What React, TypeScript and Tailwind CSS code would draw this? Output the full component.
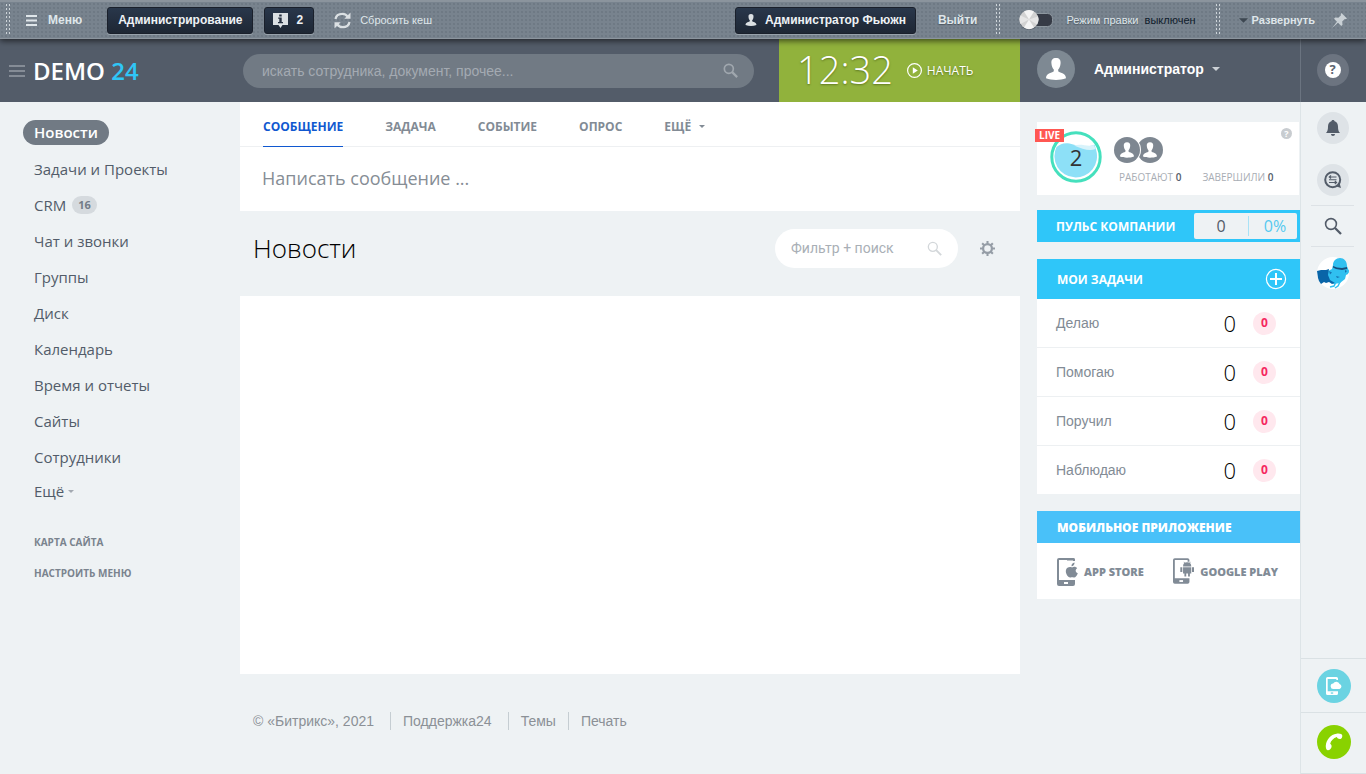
import React from 'react';

const arial = "font-['Liberation_Sans',Arial,sans-serif]";

const menuItems: { label: string; count?: number }[] = [
  { label: 'Задачи и Проекты' },
  { label: 'CRM', count: 16 },
  { label: 'Чат и звонки' },
  { label: 'Группы' },
  { label: 'Диск' },
  { label: 'Календарь' },
  { label: 'Время и отчеты' },
  { label: 'Сайты' },
  { label: 'Сотрудники' },
];

const postTabs = ['ЗАДАЧА', 'СОБЫТИЕ', 'ОПРОС'];
const taskRows = ['Делаю', 'Помогаю', 'Поручил', 'Наблюдаю'];

function Grip() {
  return (
    <svg className="h-8 w-[5px] shrink-0" viewBox="0 0 5 32" shapeRendering="crispEdges" aria-hidden="true">
      {[0, 3].map((x) => (
        <line key={x} x1={x + 0.5} x2={x + 0.5} y1="0" y2="32" stroke="#cdd4d9" strokeWidth="1" strokeDasharray="2 2" />
      ))}
    </svg>
  );
}

function Caret({ className }: { className: string }) {
  return (
    <svg className={className} viewBox="0 0 8 4" fill="currentColor" aria-hidden="true">
      <path d="M0 0h8L4 4z" />
    </svg>
  );
}

function Magnifier({ className, width = 2 }: { className: string; width?: number }) {
  return (
    <svg className={className} viewBox="0 0 18 18" fill="none" stroke="currentColor" strokeWidth={width} aria-hidden="true">
      <circle cx="7" cy="7" r="5.4" />
      <path d="M11 11l6 6" strokeWidth={width + 0.7} />
    </svg>
  );
}

function Person({ className }: { className: string }) {
  return (
    <svg className={className} viewBox="0 0 20 22" fill="currentColor" aria-hidden="true">
      <path d="M10 0C6.600 0 5.200 2 5.400 5c.2 3.500 1.200 5.200 2.400 6.400v1.800C6.800 15 0 14.500 0 20.300 3 21.500 6.500 22 10 22s7-.5 10-1.700C20 14.500 13.200 15 12.200 13.200v-1.800c1.200-1.200 2.200-2.900 2.400-6.400C14.800 2 13.400 0 10 0z" />
    </svg>
  );
}

function AdminBar() {
  const dark =
    'flex h-[27px] items-center rounded-[3px] border border-[#1a202b] bg-linear-to-b from-[#29374b] to-[#1e2734] text-xs font-bold text-[#eef2f5] shadow-[0_1px_0_#98a2ab]';
  return (
    <div
      className={`${arial} relative z-10 flex h-[39px] items-center border-t-2 border-b border-t-[#8b949d] border-b-[#8c959e] bg-[#78838e] bg-[radial-gradient(#6b7681_0.6px,transparent_1px)] bg-[size:4px_4px] px-[6px] text-[11px] text-[#dfe6ea] shadow-[0_2px_6px_rgba(0,0,0,0.6)] [text-shadow:0_1px_1px_rgba(40,50,60,0.5)]`}
    >
      <Grip />
      <button type="button" className="ml-[15px] flex items-center gap-[11px] text-xs font-bold">
        <svg className="h-[11px] w-[11px]" viewBox="0 0 11 11" fill="currentColor" aria-hidden="true">
          <path d="M0 0h11v2H0zM0 4.500h11v2H0zM0 9h11v2H0z" />
        </svg>
        Меню
      </button>
      <button type="button" className={`${dark} ml-[25px] px-[10px]`}>Администрирование</button>
      <button type="button" className={`${dark} ml-[11px] gap-2 px-2`} aria-label="Уведомления: 2">
        <svg className="h-[15px] w-[15px]" viewBox="0 0 15 15" aria-hidden="true">
          <path d="M0 0h15v12H9.500L7.500 15l-2-3H0z" fill="#dbe0e3" />
          <path d="M6.200 1.500h2.500v2H6.200zM5.200 4.600h3.500v4.400h1.300v1.300H5V9h1.300V5.800H5.200z" fill="#263040" />
        </svg>
        <span className="pr-[2px]">2</span>
      </button>
      <button type="button" className="ml-5 flex items-center gap-[9px] whitespace-nowrap">
        <svg className="h-[17px] w-[17px]" viewBox="0 0 17 17" fill="none" stroke="#dbe0e3" strokeWidth="2.200" aria-hidden="true">
          <path d="M1.500 7C2 3.500 5 1.800 8.500 1.800c2.300 0 3.800 1 5 2.700" />
          <path d="M15.500 10c-.5 3.500-3.500 5.200-7 5.200-2.300 0-3.800-1-5-2.700" />
          <path d="M16.500.5v6.200h-6.200zM.5 16.500v-6.200h6.200z" fill="#dbe0e3" stroke="none" />
        </svg>
        <span>Сбросить кеш</span>
      </button>
      <button type="button" className={`${dark} ml-auto gap-2 px-[9px]`}>
        <Person className="h-3 w-3 text-[#dbe0e3]" />
        Администратор Фьюжн
      </button>
      <a href="#logout" className="mr-[18px] ml-[22px] text-xs font-bold">Выйти</a>
      <Grip />
      <label className="mr-5 ml-[18px] flex items-center gap-[14px] whitespace-nowrap">
        <input type="checkbox" className="peer sr-only" />
        <svg className="h-[22px] w-[34px]" viewBox="0 0 34 22" aria-hidden="true">
          <rect x="8" y="4.500" width="25.500" height="13" rx="5" fill="#363b46" stroke="#8d979f" />
          <circle cx="10" cy="11.500" r="9.500" fill="#59626c" />
          <circle cx="10" cy="10.500" r="9.500" fill="#d2d2d2" />
          <path d="M10 10.500L5 2.500a9.500 9.500 0 0 1 10 0zM10 10.500L15 18.600a9.500 9.500 0 0 1-10 0z" fill="#f4f4f4" />
          <path d="M10 10.500l9-3a9.500 9.500 0 0 1-1 8zM10 10.500L1.500 15a9.500 9.500 0 0 1 0-8.500z" fill="#e6e6e6" />
        </svg>
        <span>
          Режим правки <span className="ml-[3px] text-[#101c2c] [text-shadow:none]">выключен</span>
        </span>
      </label>
      <Grip />
      <button type="button" className="ml-[18px] flex items-center gap-1 font-bold">
        <Caret className="h-[5px] w-[9px] text-[#3d4751]" />
        Развернуть
      </button>
      <button type="button" aria-label="Закрепить панель" className="mr-[13px] ml-[17px]">
        <svg className="h-[15px] w-[15px]" viewBox="0 0 15 15" fill="#c9d0d5" aria-hidden="true">
          <path d="M9.500 0L15 5.500l-1.300.8-.9-.3-2.600 2.600.4 3.200-1.300 1.200L6 9.800 0 15l5-6.200L2 5.700l1.300-1.200 3.100.3L9 2.200 8.700 1.200z" />
        </svg>
      </button>
    </div>
  );
}

function Header() {
  return (
    <header className="flex h-[63px] bg-[#535c69]">
      <div className="flex w-60 shrink-0 items-center gap-2 pl-[9px]">
        <button type="button" aria-label="Свернуть меню" className="text-[#858c96]">
          <svg className="h-3 w-4" viewBox="0 0 16 12" fill="currentColor" aria-hidden="true">
            <path d="M0 0h16v2H0zM0 5h16v2H0zM0 10h16v2H0z" />
          </svg>
        </button>
        <a href="#home" className="text-2xl font-semibold text-white">
          DEMO <span className="text-[#2fc6f6]">24</span>
        </a>
      </div>
      <div className="flex min-w-0 flex-1 items-center pr-[25px] pl-[3px]">
        <label className="flex h-[34px] flex-1 items-center rounded-full bg-[#717a84] pr-4 pl-[19px]">
          <input
            type="text"
            aria-label="Поиск"
            placeholder="искать сотрудника, документ, прочее..."
            className={`${arial} min-w-0 flex-1 bg-transparent text-sm text-white outline-none placeholder:text-[#a4aab2]`}
          />
          <Magnifier className="h-[15px] w-[15px] text-[#a0a7ae]" />
        </label>
      </div>
      <button
        type="button"
        className="flex w-[241px] shrink-0 items-center bg-[#91b23c] pl-[18px] text-white [text-shadow:0_1px_2px_rgba(60,80,10,0.6)]"
      >
        <span className="pb-[3px] text-[38px] leading-[60px] font-light">12:32</span>
        <svg className="ml-[14px] h-[15px] w-[15px]" viewBox="0 0 15 15" fill="none" stroke="currentColor" aria-hidden="true">
          <circle cx="7.500" cy="7.500" r="6.900" strokeWidth="1.200" />
          <path d="M5.800 4.300v6.400l5-3.200z" fill="currentColor" stroke="none" />
        </svg>
        <span className="ml-[5px] text-xs">НАЧАТЬ</span>
      </button>
      <button type="button" className={`${arial} flex w-[280px] shrink-0 items-center pb-[3px] pl-[17px] text-sm font-bold text-white`}>
        <span className="flex h-[38px] w-[38px] items-center justify-center rounded-full bg-[#7e8993]">
          <Person className="h-[22px] w-5" />
        </span>
        <span className="ml-[19px]">Администратор</span>
        <Caret className="ml-2 h-1 w-2 text-[#ccd1d6]" />
      </button>
      <div className="flex w-[66px] shrink-0 items-center justify-center border-l border-[#6b7480] pr-[2px] pb-[2px]">
        <button type="button" aria-label="Помощь" className="flex h-8 w-8 items-center justify-center rounded-full bg-[#6c7480]">
          <span className="flex h-4 w-4 items-center justify-center rounded-full bg-white text-[13px] leading-none font-bold text-[#5b6470]">?</span>
        </button>
      </div>
    </header>
  );
}

function Sidebar() {
  return (
    <nav className="w-60 shrink-0 pt-[18px] pl-[23px] text-[15px] text-[#525c69]">
      <a href="#news" className="inline-flex h-[25px] items-center rounded-full bg-[#717a84] px-[11px] font-semibold text-white">
        Новости
      </a>
      <ul className="mt-[6px] pl-[11px]">
        {menuItems.map((item) => (
          <li key={item.label} className="flex h-9 items-center">
            <a href={`#${item.label}`}>{item.label}</a>
            {item.count && (
              <span className="ml-[6px] flex h-[18px] items-center rounded-full bg-[#d5dade] px-[6px] text-[11px] font-bold text-[#737c87]">
                {item.count}
              </span>
            )}
          </li>
        ))}
        <li className="flex h-8 items-center">
          <button type="button" className="flex items-center gap-1">
            Ещё <Caret className="h-[3px] w-[6px] text-[#a3a9b1]" />
          </button>
        </li>
      </ul>
      <ul className="mt-5 pl-[11px] text-[10px] font-bold text-[#7a838e]">
        <li className="flex h-[31px] items-center"><a href="#map">КАРТА САЙТА</a></li>
        <li className="flex h-[31px] items-center"><a href="#setup">НАСТРОИТЬ МЕНЮ</a></li>
      </ul>
    </nav>
  );
}

function Feed() {
  return (
    <main className="min-w-0 flex-1">
      <section className="bg-white">
        <div className="flex h-[45px] gap-[42px] border-b border-[#eef0f2] pl-[23px] text-xs font-bold text-[#828b95]">
          <button type="button" className="-mb-px flex items-center border-b border-[#1058d0] pt-[5px] text-[#1058d0]">СООБЩЕНИЕ</button>
          {postTabs.map((tab) => (
            <button key={tab} type="button" className="pt-[5px]">{tab}</button>
          ))}
          <button type="button" className="flex items-center gap-2 pt-[5px]">
            ЕЩЁ <Caret className="h-[3px] w-[6px]" />
          </button>
        </div>
        <button type="button" className="flex h-16 w-full items-center pb-[2px] pl-[22px] text-lg text-[#868d95]">
          Написать сообщение ...
        </button>
      </section>
      <div className="flex h-[85px] items-center pr-[25px] pb-[10px] pl-[13px]">
        <h1 className="text-[26px] font-light text-black">Новости</h1>
        <label className="ml-auto flex h-[39px] w-[183px] items-center rounded-full bg-white px-4">
          <input
            type="text"
            aria-label="Фильтр и поиск"
            placeholder="Фильтр + поиск"
            className="min-w-0 flex-1 bg-transparent pb-[2px] font-['Roboto',sans-serif] text-sm outline-none placeholder:text-[#a9afb6]"
          />
          <Magnifier className="h-[15px] w-[15px] text-[#d3d7da]" width={1.6} />
        </label>
        <button type="button" aria-label="Настройки ленты" className="ml-[22px]">
          <svg className="h-[15px] w-[15px]" viewBox="0 0 16 16" fill="none" stroke="#959da6" aria-hidden="true">
            <circle cx="8" cy="8" r="4.700" strokeWidth="2.400" />
            <path d="M8 0v3M8 13v3M0 8h3M13 8h3M2.300 2.300l2.200 2.200M11.500 11.500l2.200 2.200M13.700 2.300l-2.200 2.200M4.500 11.500l-2.200 2.200" strokeWidth="2.200" />
          </svg>
        </button>
      </div>
      <section className="h-[378px] bg-white" />
      <footer className={`${arial} flex items-center pt-[38px] pb-8 pl-[13px] text-sm leading-[18px] text-[#8b9096]`}>
        <span className="border-r border-[#c5cdd2] pr-4">© «Битрикс», 2021</span>
        <a href="#support" className="border-r border-[#c5cdd2] pr-4 pl-3">Поддержка24</a>
        <a href="#themes" className="border-r border-[#c5cdd2] px-3">Темы</a>
        <a href="#print" className="px-3">Печать</a>
      </footer>
    </main>
  );
}

function PhoneFrame() {
  return (
    <>
      <path d="M2 0h14a2 2 0 0 1 2 2v2h-2V2H2v20h16v4a2 2 0 0 1-2 2H2a2 2 0 0 1-2-2V2a2 2 0 0 1 2-2z" />
      <rect x="7" y="24" width="4" height="2" fill="#fff" />
    </>
  );
}

function Widgets() {
  return (
    <aside className="flex w-[280px] shrink-0 flex-col pl-[17px]">
      <section className="relative mt-5 mr-px flex h-[73px] items-start bg-white pl-[13px]">
        <svg className="mt-[9px] h-[52px] w-[52px]" viewBox="0 0 52 52" role="img" aria-label="2">
          <circle cx="26" cy="26" r="24.200" fill="#fff" stroke="#45e0bd" strokeWidth="3" />
          <path d="M6.500 16c4-3.500 8-4.500 13-3.500 7 1.500 16 5.500 25 1l1.500 5a21.300 21.300 0 1 1-39.500-2.500z" fill="#8de0f7" />
          <path d="M24 14.500c8-2 13 1.500 20-.5l1.500 4c-6 2.500-13 0-21.500-3.500z" fill="#d8f3fb" />
          <text x="26" y="35" textAnchor="middle" fontFamily="Open Sans, sans-serif" fontSize="22" fill="#333">2</text>
        </svg>
        <span className="absolute top-[7px] left-[-2px] flex h-[13px] items-center bg-[#ff5752] px-1 text-[10px] font-bold text-white">LIVE</span>
        <div className="ml-3 pt-[15px]">
          <div className="flex">
            <span className="z-[1] flex h-[26px] w-[26px] items-center justify-center rounded-full bg-[#7e8791] text-white shadow-[0_0_0_1px_white]">
              <Person className="h-4 w-[14px]" />
            </span>
            <span className="-ml-[3px] flex h-[26px] w-[26px] items-center justify-center rounded-full bg-[#7e8791] text-white">
              <Person className="h-4 w-[14px]" />
            </span>
          </div>
          <p className="mt-[7px] flex gap-[21px] pl-[5px] text-[10px] leading-[15px] whitespace-nowrap text-[#a8adb4]">
            <span>РАБОТАЮТ <b className="font-semibold text-[#535c69]">0</b></span>
            <span>ЗАВЕРШИЛИ <b className="font-semibold text-[#535c69]">0</b></span>
          </p>
        </div>
        <button
          type="button"
          aria-label="Справка"
          className="absolute top-[6px] right-[7px] flex h-[11px] w-[11px] items-center justify-center rounded-full bg-[#c8ccd0] text-[9px] leading-none font-bold text-white"
        >
          ?
        </button>
      </section>

      <section className="mt-[15px] flex h-8 items-center bg-[#2fc6f9] pr-[3px] pl-[19px]">
        <h2 className="flex-1 pt-[2px] text-xs font-bold whitespace-nowrap text-white">ПУЛЬС КОМПАНИИ</h2>
        <div className="flex h-[26px] w-[103px] items-center rounded-[2px] bg-[#eef2f4] text-base">
          <span className="flex-1 text-center text-[#535c69]">0</span>
          <span className="h-5 w-px bg-[#a9e2f6]" />
          <span className="w-12 pl-1 text-center text-[#55c9f0]">0%</span>
        </div>
      </section>

      <section className="mt-[17px] bg-white">
        <div className="flex h-10 items-center justify-between bg-[#2fc6f9] pr-[13px] pl-5 text-white">
          <h2 className="pt-[2px] text-xs font-bold">МОИ ЗАДАЧИ</h2>
          <button type="button" aria-label="Добавить задачу">
            <svg className="h-[22px] w-[22px]" viewBox="0 0 22 22" fill="none" stroke="currentColor" aria-hidden="true">
              <circle cx="11" cy="11" r="9.600" strokeWidth="1.200" />
              <path d="M11 5v12M5 11h12" strokeWidth="2" />
            </svg>
          </button>
        </div>
        <ul className="divide-y divide-[#edf0f2]">
          {taskRows.map((row) => (
            <li key={row} className="flex h-[49px] items-center pr-6 pl-[19px] last:h-12">
              <a href={`#${row}`} className={`${arial} flex-1 text-sm text-[#828b95]`}>{row}</a>
              <span className="text-[22px] font-light text-black">0</span>
              <span className="ml-[17px] flex h-[23px] w-[23px] items-center justify-center rounded-full bg-[#ffe8ee] text-xs font-bold text-[#f5275f]">0</span>
            </li>
          ))}
        </ul>
      </section>

      <section className="mt-[17px] bg-white">
        <h2 className="flex h-8 items-center bg-[#49c1f9] pt-[2px] pl-5 text-xs font-extrabold text-white">МОБИЛЬНОЕ ПРИЛОЖЕНИЕ</h2>
        <div className="flex h-14 items-center justify-between pt-[2px] pr-[22px] pl-5 text-[11px] font-extrabold whitespace-nowrap text-[#818b96]">
          <a href="#ios" className="flex items-center gap-[6px]">
            <svg className="h-7 w-[21px]" viewBox="0 0 21 28" fill="currentColor" aria-hidden="true">
              <PhoneFrame />
              <path d="M10 3h8v2.500h-8zM13 6h8v15h-8z" fill="#fff" />
              <path d="M10 3V0h6a2 2 0 0 1 2 2v1z" />
              <path d="M10 2.500h6V5h-6z" fill="#fff" />
              <path d="M15 9.500c2-1.200 4-.8 5.200.8-2.200 1.400-2 4 .6 5-1 2.600-2.500 4.600-4 4.200-1.200-.5-2-.5-3.200 0-2.500.6-5.300-4-4.700-7.200.6-2.800 3.600-3.800 6.100-2.800zM14.500 8.300c-.2-2.100 1.200-3.500 3-3.800.2 2-1 3.700-3 3.800z" />
            </svg>
            APP STORE
          </a>
          <a href="#android" className="flex items-center gap-[6px]">
            <svg className="mb-[3px] h-[26px] w-[21px]" viewBox="0 0 23 28" fill="currentColor" aria-hidden="true">
              <PhoneFrame />
              <path d="M7.500 5h15v14h-15z" fill="#fff" />
              <path d="M11 9a4.500 4.500 0 0 1 9 0zM11 9.800h9v7h-1.500V20h-2v-3.200h-2V20h-2v-3.200H11zM8 10h2.200v5H8zM20.800 10H23v5h-2.200z" />
              <path d="M12 4l1.500 2.500M19 4l-1.500 2.500" stroke="currentColor" strokeWidth=".8" />
            </svg>
            GOOGLE PLAY
          </a>
        </div>
      </section>
    </aside>
  );
}

function Bird() {
  return (
    <svg className="h-8 w-8" viewBox="0 0 32 32" aria-hidden="true">
      <circle cx="16" cy="16" r="16" fill="#fff" />
      <path d="M16 8c0-4 3-7 7-7s7 3 7 8l2 5-1 3-2 1-1 4-5 4-6 1-5-3-2-6 1-4 4-2z" fill="#30c0f0" />
      <path d="M0 14l4-1h5l3-1-1 6 2 5 5 3-3 1-3-2-3 1-2-1-3 2-2-3-1-3z" fill="#0965a8" />
      <path d="M16 9l4 1.500 5 .5 5-1v2l-5 1-6-1-3-1.500z" fill="#174e7d" />
      <path d="M12 14l3 1.500-2 2zM28 13l2 1-2 2zM19 19l4 1-3 1z" fill="#1673b2" />
      <path d="M19 25l-2 4-4 1M23 25l-2 4-3 2M28 17l3-2v-2" fill="none" stroke="#30c0f0" strokeWidth="1.500" />
    </svg>
  );
}

function Rail() {
  const round = 'flex h-8 w-8 items-center justify-center rounded-full bg-[#dee3e7] text-[#535c69]';
  return (
    <aside className="flex w-[66px] shrink-0 flex-col border-l border-[#dde4e7] pt-[10px] text-[#535c69]">
      <div className="flex flex-col items-center pr-[2px]">
        <button type="button" aria-label="Уведомления" className={round}>
          <svg className="h-4 w-[14px]" viewBox="0 0 14 16" fill="currentColor" aria-hidden="true">
            <path d="M7 0c1 0 1.500.6 1.600 1.300C11 2 12 4 12 6.500c0 3 .4 4.700 2 6.500H0c1.600-1.800 2-3.500 2-6.500C2 4 3 2 5.400 1.300 5.500.6 6 0 7 0zM5 14h4c0 1.200-.8 2-2 2s-2-.8-2-2z" />
          </svg>
        </button>
        <button type="button" aria-label="Сообщения" className={`${round} mt-5`}>
          <svg className="h-[18px] w-[18px]" viewBox="0 0 18 18" fill="none" stroke="currentColor" aria-hidden="true">
            <circle cx="8.700" cy="8.700" r="7.500" strokeWidth="2" />
            <path d="M12.500 15.500L15.500 12l1.500 5z" fill="currentColor" stroke="none" />
            <path d="M5 6h7.500M5 8.700h7.500M5 11.500h7.500M7 4.300L5.200 6 7 7.500M10.800 10l1.800 1.500-1.800 1.500" strokeWidth="1.100" />
          </svg>
        </button>
        <div className="mt-[9px] flex h-[42px] w-[43px] items-center justify-center border-y border-[#dde2e6]">
          <button type="button" aria-label="Поиск">
            <Magnifier className="h-[18px] w-[18px]" width={1.6} />
          </button>
        </div>
        <button type="button" aria-label="Ассистент" className="mt-[10px]">
          <Bird />
        </button>
      </div>
      <div className="mt-auto flex h-[54px] w-full items-center justify-center border-t border-[#dae1e4]">
        <button type="button" aria-label="Мобильное приложение" className="flex h-[34px] w-[34px] items-center justify-center rounded-full bg-[#6bd3e2]">
          <svg className="h-[18px] w-4" viewBox="0 0 16 18" fill="#fff" aria-hidden="true">
            <path d="M1.500 0h9A1.500 1.500 0 0 1 12 1.500V3h-1.700V2H1.700v12.300H12v2.200a1.500 1.500 0 0 1-1.500 1.500h-9A1.500 1.500 0 0 1 0 16.500v-15A1.500 1.500 0 0 1 1.500 0z" />
            <path d="M4.800 15.400h2.400v1.300H4.800z" fill="#6bd3e2" />
            <path d="M7.500 12a2.700 2.700 0 0 1-.3-5.400A3.500 3.500 0 0 1 13.600 7 2.600 2.600 0 0 1 13.500 12z" />
          </svg>
        </button>
      </div>
      <div className="flex h-[62px] w-full items-center justify-center border-y border-[#dae1e4] pb-[2px]">
        <button type="button" aria-label="Позвонить" className="flex h-[34px] w-[34px] items-center justify-center rounded-full bg-[#89d200]">
          <svg className="h-[18px] w-[18px]" viewBox="0 0 18 18" fill="#fff" aria-hidden="true">
            <path d="M.8 12.500C1.500 6.500 5.500 1.500 11.500.7c3-.5 5.800.3 5.800 2 0 1.500-.5 2.800-1.800 3.200-1.700.4-3.200-.6-3.700-1.900C8.500 5 5.800 7.800 5.200 10.800c1.200.8 1.800 2.200 1.200 3.700-.7 1.700-2.200 2.900-3.700 2.700C1.200 17 .6 14.500.8 12.500z" />
          </svg>
        </button>
      </div>
    </aside>
  );
}

export default function App() {
  return (
    <div className="flex min-h-screen flex-col bg-[#eef2f4] font-['Open_Sans',sans-serif]">
      <AdminBar />
      <Header />
      <div className="flex flex-1">
        <Sidebar />
        <Feed />
        <Widgets />
        <Rail />
      </div>
    </div>
  );
}
